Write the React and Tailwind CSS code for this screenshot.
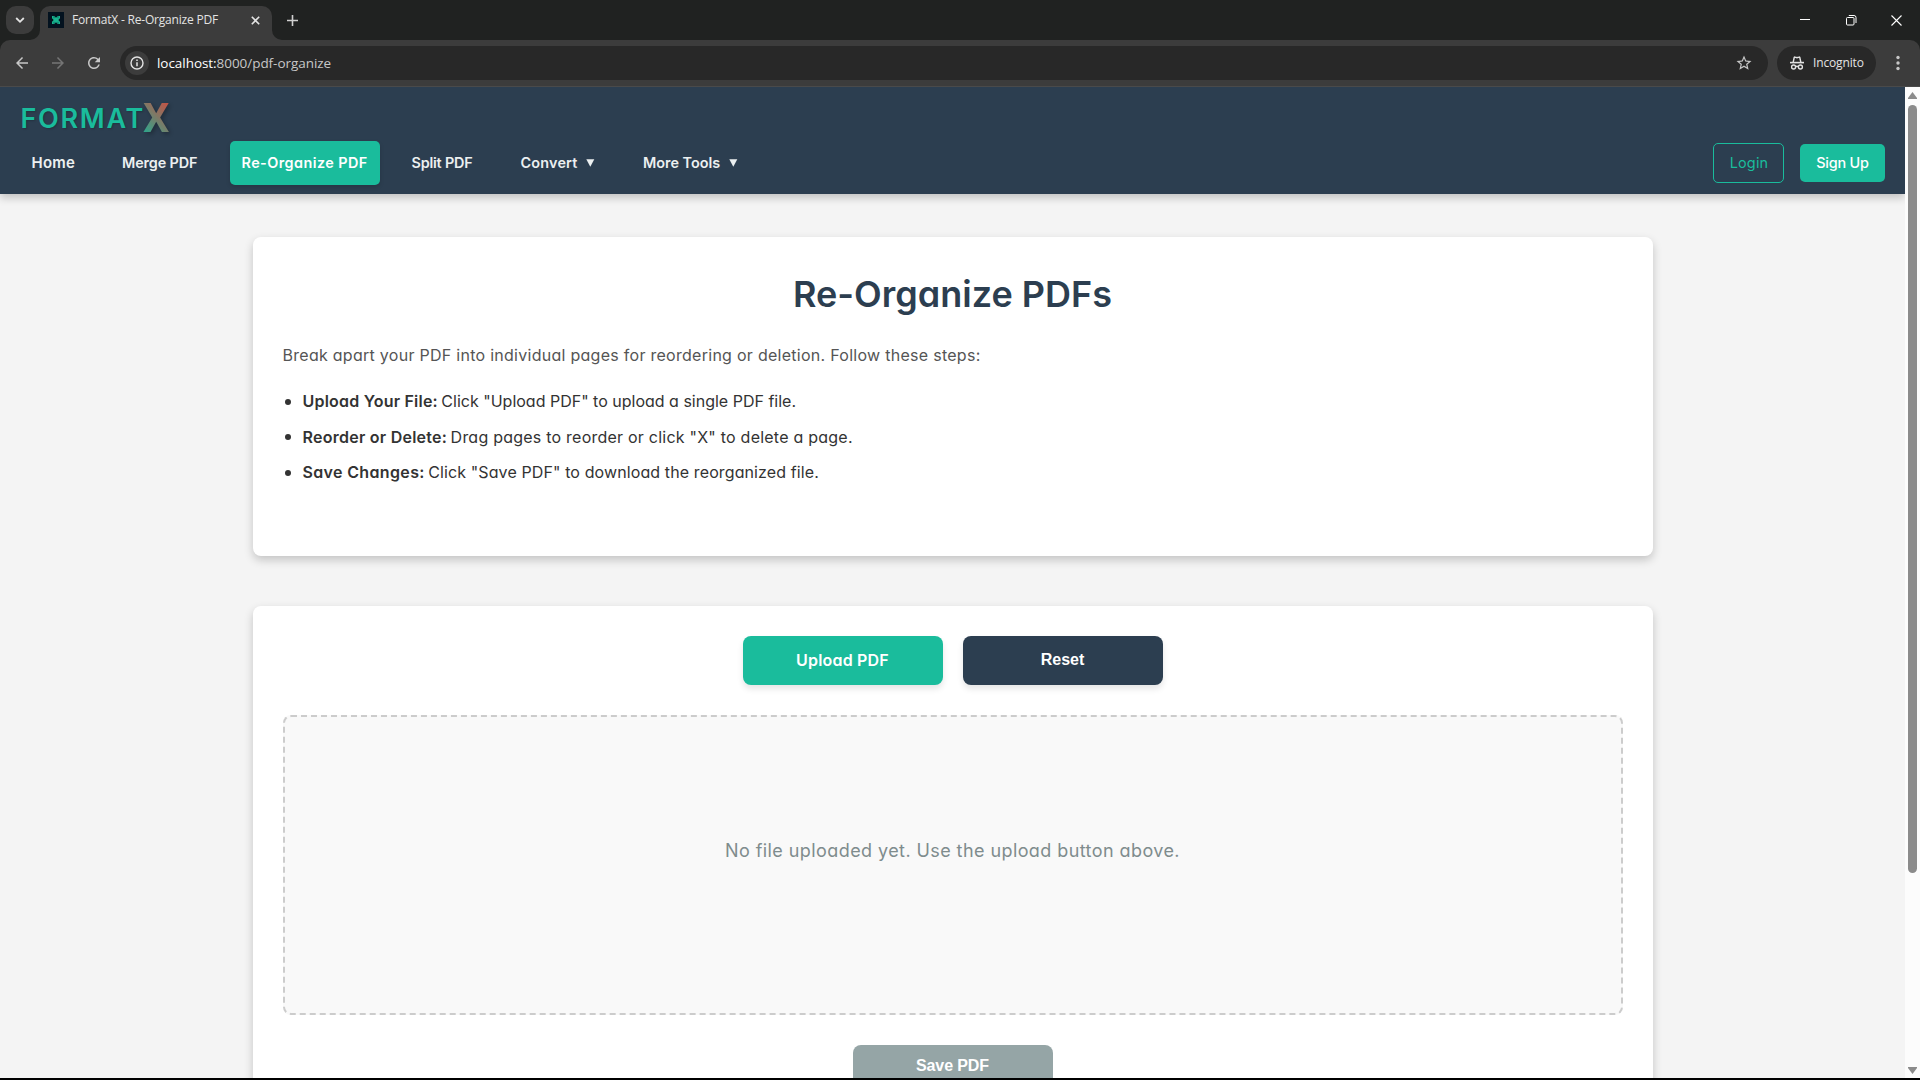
import React from "react";
import { MdStarBorder, MdRefresh, MdArrowBack, MdArrowForward } from "react-icons/md";

function Favicon() {
  return (
    <svg width="16" height="16" viewBox="0 0 16 16" className="shrink-0">
      <rect width="16" height="16" fill="#03121f" />
      <path d="M4 4h2.200l1.800 1.800L9.800 4H12v2.200L10.300 8l1.700 1.800V12H9.800L8 10.200 6.200 12H4V9.800L5.700 8 4 6.200z" fill="#17b58f" />
      <path d="M6 4.200v2M10 4.200v2M6 9.800v2M10 9.800v2" stroke="#0a5a58" strokeWidth="0.8" />
    </svg>
  );
}

function Incognito() {
  return (
    <svg width="16" height="16" viewBox="0 0 16 16" fill="none" stroke="#e3e3e3" strokeWidth="1.4" className="shrink-0">
      <path d="M4.2 7.2 5.2 2.5c.1-.4.5-.6.9-.4L8 2.7l1.9-.6c.4-.2.8 0 .9.4l1 4.7" />
      <path d="M1 7.6h14" strokeWidth="1.6" />
      <circle cx="4.6" cy="12" r="2" />
      <circle cx="11.4" cy="12" r="2" />
      <path d="M6.6 11.8c.8-.6 2-.6 2.8 0" />
    </svg>
  );
}

function TitleBar() {
  return (
    <div className="flex h-10 items-start bg-[#202221] pl-1.5 pt-1.5">
      <div className="flex size-7 items-center justify-center rounded-[10px] bg-[#3c3c3c]">
        <svg width="10" height="8" viewBox="0 0 10 8" fill="none" stroke="#e3e3e3" strokeWidth="1.8">
          <path d="M1.2 2 5 5.8 8.8 2" />
        </svg>
      </div>
      <div className="flex h-[34px] items-end">
        <svg width="10" height="10" viewBox="0 0 10 10" className="-ml-1">
          <path d="M10 0v10H0A10 10 0 0 0 10 0z" fill="#3c3c3c" />
        </svg>
        <div className="flex h-[34px] w-[232px] items-center rounded-t-[10px] bg-[#3c3c3c] pb-1.5 pl-2 pr-3">
          <Favicon />
          <span className="ml-2 flex-1 whitespace-nowrap text-xs leading-[18px] tracking-[-0.19px] text-[#e3e3e3]">FormatX - Re-Organize PDF</span>
          <svg width="9" height="9" viewBox="0 0 9 9" stroke="#e3e3e3" strokeWidth="1.6">
            <path d="M.8.8l7.4 7.4M8.2.8.8 8.2" />
          </svg>
        </div>
        <svg width="10" height="10" viewBox="0 0 10 10">
          <path d="M0 0v10h10A10 10 0 0 1 0 0z" fill="#3c3c3c" />
        </svg>
      </div>
      <svg width="11" height="11" viewBox="0 0 11 11" stroke="#d0d0d0" strokeWidth="1.6" className="ml-[5px] mt-[8.5px]">
        <path d="M5.5 0v11M0 5.5h11" />
      </svg>
      <div className="ml-auto flex h-7 items-center pr-[18px]">
        <svg width="10" height="10" viewBox="0 0 10 10" stroke="#fff" strokeWidth="1">
          <path d="M0 4.5h10" />
        </svg>
        <svg width="11" height="11" viewBox="0 0 11 11" fill="none" stroke="#fff" strokeWidth="1" className="ml-9">
          <rect x=".5" y="2.5" width="7.5" height="7.5" rx="1" />
          <path d="M2.8.5h5.2a2 2 0 0 1 2 2V8" />
        </svg>
        <svg width="11" height="11" viewBox="0 0 11 11" stroke="#fff" strokeWidth="1.1" className="ml-[34px]">
          <path d="M.5.5l10 10M10.5.5l-10 10" />
        </svg>
      </div>
    </div>
  );
}

function Toolbar() {
  return (
    <div className="bg-[#202221]">
      <div className="flex h-[47px] items-start rounded-t-[10px] border-b border-[#4a4a4a] bg-[#3c3c3c] pt-1.5">
        <div className="flex h-[34px] w-[120px] items-center">
          <MdArrowBack size={18} color="#c7c7c7" className="ml-[13px]" />
          <MdArrowForward size={18} color="#757575" className="ml-[18px]" />
          <MdRefresh size={18} color="#c7c7c7" className="ml-[18px]" />
        </div>
        <div className="flex h-[34px] w-[1648px] items-center rounded-full bg-[#282828] pl-[5px] pr-[15px]">
          <div className="flex size-6 items-center justify-center rounded-full bg-[#3c3c3c]">
            <svg width="14" height="14" viewBox="0 0 14 14" fill="none" stroke="#e3e3e3" strokeWidth="1.4">
              <circle cx="7" cy="7" r="6" />
              <path d="M7 6.2v4M7 3.6v1.5" strokeWidth="1.5" />
            </svg>
          </div>
          <span className="ml-2 whitespace-nowrap text-[13.5px] leading-5 tracking-[-0.05px] text-[#c7c7c7]">
            <span className="text-white">localhost:</span>8000/pdf-organize
          </span>
          <MdStarBorder size={18} color="#c7c7c7" className="ml-auto" />
        </div>
        <div className="ml-[9px] flex h-[34px] w-[99px] items-center rounded-full bg-[#282828] pl-3">
          <Incognito />
          <span className="ml-2 text-xs leading-[18px] tracking-[-0.15px] text-[#e3e3e3]">Incognito</span>
        </div>
        <svg width="4" height="34" viewBox="0 0 4 34" fill="#c7c7c7" className="ml-5">
          <circle cx="2" cy="11.5" r="1.7" />
          <circle cx="2" cy="17" r="1.7" />
          <circle cx="2" cy="22.5" r="1.7" />
        </svg>
      </div>
    </div>
  );
}

function Caret() {
  return (
    <svg width="9" height="8" viewBox="0 0 9 8" fill="#ecf0f1">
      <path d="M.3.3h8L4.3 7.7z" />
    </svg>
  );
}

function Header() {
  return (
    <header className="relative h-[107px] bg-[#2c3e50] shadow-[0_4px_8px_rgba(0,0,0,0.2)]">
      <div className="flex h-[54px] items-start pl-[20.5px] pt-[17px] leading-[30px]">
        <span className="text-[27px] font-semibold tracking-[1.7px] text-[#1abc9c] [text-shadow:1px_1px_2px_rgba(0,0,0,0.2)]">FORMAT</span>
        <span className="-ml-[2px] -mt-[9px] bg-linear-[45deg,#1abc9c_5%,#e74c3c_95%] bg-clip-text font-['Roboto',sans-serif] text-[41.5px] font-bold leading-[46px] text-transparent opacity-90 drop-shadow-[2px_2px_2px_rgba(0,0,0,0.3)]">X</span>
      </div>
      <div className="flex h-11 items-center px-5 text-[14.4px] font-semibold leading-[22px] text-[#ecf0f1]">
        <nav className="flex h-11 items-center whitespace-nowrap">
          <a className="w-[90px] pl-[11.5px] text-[15px] tracking-[0.2px]">Home</a>
          <a className="w-[119.5px] pl-3 tracking-[-0.13px]">Merge PDF</a>
          <a className="flex h-11 w-[150px] items-center rounded-[5px] bg-[#1abc9c] pl-[12px] tracking-[0.44px] text-white shadow-[0_2px_4px_rgba(0,0,0,0.15)]">Re-Organize PDF</a>
          <a className="w-[129px] pl-[32px] tracking-[-0.2px]">Split PDF</a>
          <a className="flex w-[122.5px] items-center pl-3">
            <span className="w-[65.5px] tracking-[0.2px]">Convert</span>
            <Caret />
          </a>
          <a className="flex items-center pl-3">
            <span className="w-[85.5px]">More Tools</span>
            <Caret />
          </a>
        </nav>
        <div className="ml-auto flex items-center gap-4">
          <a className="flex h-10 w-[71px] items-center justify-center rounded-[5px] border border-[#1abc9c] pl-px font-normal tracking-[0.2px] text-[#1abc9c]">Login</a>
          <a className="flex h-[38px] w-[85px] items-center justify-center rounded-[5px] bg-[#1abc9c] font-medium tracking-[-0.2px] text-white">Sign Up</a>
        </div>
      </div>
    </header>
  );
}

function Bullet() {
  return <span className="ml-[2px] mr-3 size-1.5 rounded-full bg-[#333]" />;
}

function Instructions() {
  return (
    <section className="h-[319px] rounded-lg bg-white p-[30px] text-base shadow-[0_4px_10px_rgba(0,0,0,0.2)]">
      <h1 className="text-center text-4xl/[54px] font-semibold text-[#2c3e50]">Re-Organize PDFs</h1>
      <p className="mt-[21px] leading-[26px] tracking-[0.275px] text-[#555]">Break apart your PDF into individual pages for reordering or deletion. Follow these steps:</p>
      <ul className="mt-[21px] flex flex-col gap-2.5 leading-[25.6px] text-[#333]">
        <li className="flex items-center">
          <Bullet />
          <strong className="mr-[3.5px] font-semibold tracking-[0.21px]">Upload Your File:</strong>
          <span>Click "Upload PDF" to upload a single PDF file.</span>
        </li>
        <li className="flex items-center">
          <Bullet />
          <strong className="mr-[3.5px] font-semibold tracking-[0.25px]">Reorder or Delete:</strong>
          <span className="tracking-[0.23px]">Drag pages to reorder or click "X" to delete a page.</span>
        </li>
        <li className="flex items-center">
          <Bullet />
          <strong className="mr-[3.5px] font-semibold tracking-[0.35px]">Save Changes:</strong>
          <span className="tracking-[0.11px]">Click "Save PDF" to download the reorganized file.</span>
        </li>
      </ul>
    </section>
  );
}

function Workspace() {
  return (
    <section className="mt-[50px] h-[540px] rounded-lg bg-white p-[30px] shadow-[0_4px_10px_rgba(0,0,0,0.2)]">
      <div className="flex justify-center gap-5 text-base text-white">
        <button className="h-[49px] w-[200px] rounded-lg bg-[#1abc9c] pb-[2px] font-semibold tracking-[0.18px] shadow-[0_4px_6px_rgba(0,0,0,0.1)]">Upload PDF</button>
        <button className="h-[49px] w-[200px] rounded-lg bg-[#2c3e50] pb-[2px] font-['Liberation_Sans',Arial,sans-serif] font-bold shadow-[0_4px_6px_rgba(0,0,0,0.1)]">Reset</button>
      </div>
      <div className="mt-[30px] h-[300px] rounded-lg border-2 border-dashed border-[#ccc] bg-[#f9f9f9] pt-[120px] text-center text-lg/7 tracking-[0.42px] text-[#7f8c8d]">
        No file uploaded yet. Use the upload button above.
      </div>
      <button className="mx-auto mt-[30px] block h-[42px] w-[200px] rounded-lg bg-[#95a5a6] pb-px font-['Liberation_Sans',Arial,sans-serif] text-base font-bold tracking-[-0.1px] text-white">Save PDF</button>
    </section>
  );
}

function Scrollbar() {
  return (
    <div className="flex h-full w-[15px] flex-col items-center bg-[#fcfcfc]">
      <svg width="9" height="7" viewBox="0 0 9 7" fill="#8b8b8b" className="mt-[5px] shrink-0">
        <path d="M4.5 0 9 6v1H0V6z" />
      </svg>
      <div className="mt-[6px] h-[768px] w-[9px] rounded-full bg-[#8b8b8b]" />
      <svg width="9" height="7" viewBox="0 0 9 7" fill="#8b8b8b" className="mb-1 mt-auto shrink-0">
        <path d="M4.5 7 9 1V0H0v1z" />
      </svg>
    </div>
  );
}

export default function App() {
  return (
    <div className="flex h-[1080px] w-[1920px] flex-col overflow-hidden border-b-2 border-black bg-[#f4f4f4] font-['Open_Sans',sans-serif]">
      <TitleBar />
      <Toolbar />
      <div className="flex min-h-0 flex-1">
        <div className="w-[1905px] overflow-hidden font-['Inter',sans-serif] [font-feature-settings:'cv11']">
          <Header />
          <main className="mx-auto w-[1400px] pt-[43px]">
            <Instructions />
            <Workspace />
          </main>
        </div>
        <Scrollbar />
      </div>
    </div>
  );
}
